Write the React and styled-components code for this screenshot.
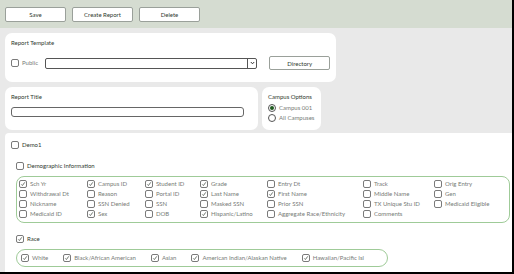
import styled, { createGlobalStyle } from "styled-components";

const GlobalStyle = createGlobalStyle`
    html, body {
        margin: 0;
        padding: 0;
        background: #ffffff;
    }
    body {
        font-family: Lato, "Open Sans", sans-serif;
        font-size: 6px;
        color: #3a3a3a;
    }
    * { box-sizing: border-box; }
`

const DEMOGRAPHIC = [
    [["Sch Yr", true], ["Campus ID", true], ["Student ID", true], ["Grade", true], ["Entry Dt", false], ["Track", false], ["Orig Entry", false]],
    [["Withdrawal Dt", false], ["Reason", false], ["Portal ID", false], ["Last Name", true], ["First Name", true], ["Middle Name", false], ["Gen", false]],
    [["Nickname", false], ["SSN Denied", false], ["SSN", false], ["Masked SSN", false], ["Prior SSN", false], ["TX Unique Stu ID", false], ["Medicaid Eligible", false]],
    [["Medicaid ID", false], ["Sex", true], ["DOB", false], ["Hispanic/Latino", true], ["Aggregate Race/Ethnicity", false], ["Comments", false]],
];

const RACES = ["White", "Black/African American", "Asian", "American Indian/Alaskan Native", "Hawaiian/Pacific Isl"];

const Check = ({ checked }) => (
    <Box>
        {checked &&
            <svg width="6" height="6" viewBox="0 0 6 6">
                <path d="M1.3 3.4 L2.4 4.5 L4.8 1.3" fill="none" stroke="#2f3a2f" strokeWidth="0.7" />
            </svg>
        }
    </Box>
);

const CheckItem = ({ label, checked, dark }) => (
    <Item>
        <Check checked={checked} />
        <ItemText $dark={dark}>{label}</ItemText>
    </Item>
);

const App = () => {
    return (
        <Frame>
            <GlobalStyle />
            <Toolbar>
                <Button>Save</Button>
                <Button>Create Report</Button>
                <Button>Delete</Button>
            </Toolbar>

            <Body>
                <Card $width={331} $height={49} $gap={5}>
                    <Label>Report Template</Label>
                    <TemplateRow>
                        <CheckItem label="Public" />
                        <Select>
                            <Arrow>
                                <svg width="5" height="4" viewBox="0 0 5 4">
                                    <path d="M0.8 1 L2.5 2.8 L4.2 1" fill="none" stroke="#222" strokeWidth="0.9" />
                                </svg>
                            </Arrow>
                        </Select>
                        <Button $width={61} $height={14}>Directory</Button>
                    </TemplateRow>
                </Card>

                <CardRow>
                    <Card $width={253} $height={43}>
                        <Label>Report Title</Label>
                        <TextInput />
                    </Card>
                    <Card $width={59} $height={43}>
                        <Label>Campus Options</Label>
                        <RadioList>
                            <Item>
                                <Radio $on />
                                <ItemText>Campus 001</ItemText>
                            </Item>
                            <Item>
                                <Radio />
                                <ItemText>All Campuses</ItemText>
                            </Item>
                        </RadioList>
                    </Card>
                </CardRow>

                <Main>
                    <CheckItem label="Demo1" dark />
                    <Section>
                        <CheckItem label="Demographic Information" dark />
                        <DemoGroup>
                            {DEMOGRAPHIC.flat().map(([label, checked]) => (
                                <CheckItem key={label} label={label} checked={checked} />
                            ))}
                        </DemoGroup>
                        <SectionGap />
                        <CheckItem label="Race" checked dark />
                        <RaceGroup>
                            {RACES.map((race) => (
                                <CheckItem key={race} label={race} checked />
                            ))}
                        </RaceGroup>
                    </Section>
                </Main>
            </Body>
        </Frame>
    );
}

const Frame = styled.div`
    width: 514px;
    height: 274px;
    border-right: 2px solid #000;
    border-bottom: 2px solid #000;
    display: flex;
    flex-direction: column;
    overflow: hidden;
    background: #e9e9e9;
`
const Toolbar = styled.div`
    height: 28px;
    flex-shrink: 0;
    background: #d5dcd1;
    display: flex;
    align-items: flex-start;
    gap: 6px;
    padding: 7px 5px 0;
`
const Button = styled.div`
    width: ${p => p.$width || 61}px;
    height: ${p => p.$height || 15}px;
    background: #fff;
    border: 1px solid #9aa09a;
    border-radius: 2px;
    display: flex;
    align-items: center;
    justify-content: center;
    color: #2f3a2f;
    font-size: 6px;
`
const Body = styled.div`
    flex: 1;
    display: flex;
    flex-direction: column;
    padding: 5px 0 0 5px;
    min-height: 0;
`
const Card = styled.div`
    width: ${p => p.$width}px;
    height: ${p => p.$height}px;
    margin-bottom: ${p => p.$gap || 0}px;
    background: #fff;
    border-radius: 7px;
    padding: 6px 6px;
    display: flex;
    flex-direction: column;
    flex-shrink: 0;
`
const CardRow = styled.div`
    display: flex;
    gap: 4px;
    margin-bottom: 3px;
`
const Label = styled.div`
    color: #2f3a2f;
    font-size: 6px;
    line-height: 8px;
`
const TemplateRow = styled.div`
    display: flex;
    align-items: center;
    margin-top: 9px;
    & > :first-child { width: 34px; }
    & > :last-child { margin-left: 12px; }
`
const Select = styled.div`
    width: 214px;
    height: 11px;
    border: 1px solid #555;
    border-radius: 2px;
    display: flex;
    justify-content: flex-end;
`
const Arrow = styled.div`
    width: 9px;
    height: 100%;
    border-left: 1px solid #555;
    display: flex;
    align-items: center;
    justify-content: center;
`
const TextInput = styled.div`
    margin-top: 6px;
    width: 233px;
    height: 10px;
    border: 1px solid #666;
    border-radius: 3px;
`
const RadioList = styled.div`
    display: flex;
    flex-direction: column;
    margin-top: 2px;
`
const Radio = styled.span`
    width: 8px;
    height: 8px;
    border-radius: 50%;
    border: 1px solid #555;
    background: #fff;
    flex-shrink: 0;
    display: flex;
    align-items: center;
    justify-content: center;
    &::after {
        content: "";
        display: ${p => p.$on ? "block" : "none"};
        width: 4px;
        height: 4px;
        border-radius: 50%;
        background: #1f5a1f;
    }
`
const Main = styled.div`
    flex: 1;
    background: #fff;
    border-top-left-radius: 4px;
    padding: 7px 0 0 6px;
    display: flex;
    flex-direction: column;
`
const Section = styled.div`
    padding: 11px 0 0 5px;
    display: flex;
    flex-direction: column;
`
const SectionGap = styled.div`
    height: 11px;
`
const Item = styled.div`
    display: flex;
    align-items: center;
    gap: 3px;
    height: 10px;
    white-space: nowrap;
`
const Box = styled.span`
    width: 8px;
    height: 8px;
    border: 1px solid #7a7a7a;
    border-radius: 2px;
    background: #fff;
    flex-shrink: 0;
    display: flex;
    align-items: center;
    justify-content: center;
`
const ItemText = styled.span`
    color: ${p => p.$dark ? "#2f3a2f" : "#777b77"};
    font-size: 6px;
    line-height: 8px;
`
const DemoGroup = styled.div`
    margin-top: 5px;
    width: 494px;
    height: 47px;
    border: 1px solid #9fcb98;
    border-radius: 8px;
    padding: 2px 2px 3px;
    display: grid;
    grid-template-columns: 68px 58px 55px 67px 96px 71px auto;
    grid-auto-rows: 10px;
`
const RaceGroup = styled.div`
    margin-top: 5px;
    align-self: flex-start;
    width: 372px;
    height: 18px;
    border: 1px solid #9fcb98;
    border-radius: 9px;
    padding: 0 4px;
    display: flex;
    align-items: center;
    gap: 15px;
`

export default App;
